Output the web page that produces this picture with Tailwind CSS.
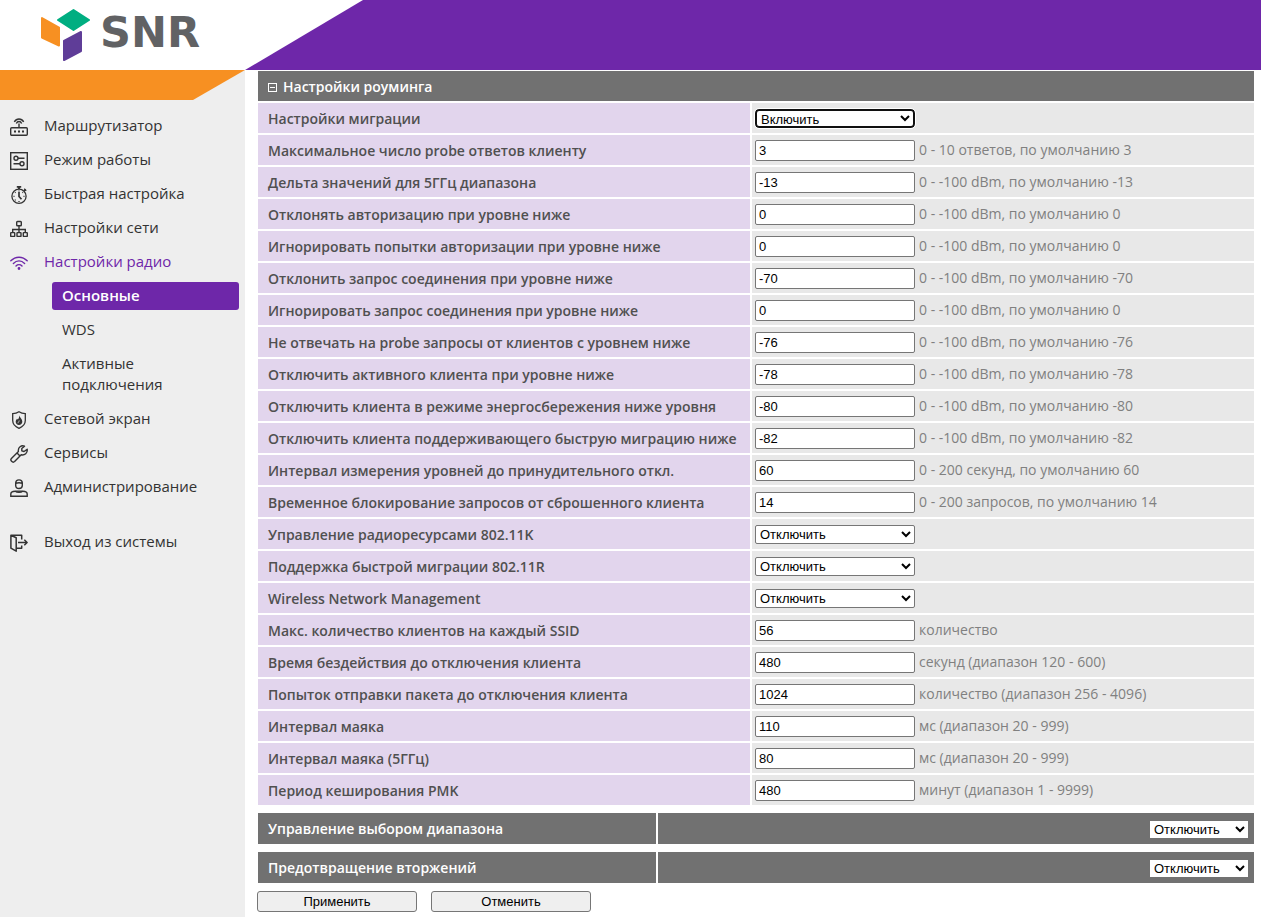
<!DOCTYPE html>
<html lang="ru">
<head>
<meta charset="utf-8">
<title>SNR — Настройки радио</title>
<script src="https://cdn.jsdelivr.net/npm/@tailwindcss/browser@4"></script>
</head>
<body class="flex min-h-screen flex-col bg-white font-['Open_Sans','Noto_Sans',sans-serif] text-[14px] text-[#333]">
<header class="flex h-[70px] shrink-0">
  <a href="#" class="flex w-[245px] shrink-0 items-start gap-[10px] pl-10" aria-label="SNR">
    <svg class="mt-2 h-[54px] w-[50px] shrink-0" viewBox="0 0 50 54" stroke-width="2" stroke-linejoin="round">
      <path d="M2 10 L19 19.500V37.500L2 29.500Z" fill="#f79022" stroke="#f79022"/>
      <path d="M33.500 2 L49 12 L33.500 22 L18 12Z" fill="#00ae81" stroke="#00ae81"/>
      <path d="M24 33 L41 24V43L24 52Z" fill="#5f3d98" stroke="#5f3d98"/>
    </svg>
    <span class="mt-[7px] font-['DejaVu_Sans',sans-serif] text-[43px] leading-[50px] font-bold text-[#616264]">SNR</span>
  </a>
  <div class="flex-1 bg-[#6e27a9] [clip-path:polygon(118px_0,100%_0,100%_100%,0_100%)]"></div>
</header>
<div class="flex flex-1">
  <aside class="w-[245px] shrink-0 bg-[#eee]">
    <div class="h-[30px] bg-[#f79022] [clip-path:polygon(0_0,100%_0,193px_100%,0_100%)]"></div>
    <nav class="pt-3 text-[15px] leading-[21px]">
      <ul class="flex flex-col gap-[6px]">
        <li><a href="#" class="flex items-start gap-4 pt-[3px] pb-[4px] pl-[10px]">
          <svg class="mt-[3px] size-[18px] shrink-0" viewBox="0 0 18 18" fill="none" stroke="#333" stroke-width="1.400"><rect x=".7" y="9.700" width="16.600" height="7.600" rx="1"/><path d="M9 5.500V9.500M4.300 3.800C6.600 0 11.400 0 13.700 3.800M6.300 5.500C7.500 2.800 10.500 2.800 11.700 5.500"/><path d="M4 13.500h2M8 13.500h2M12 13.500h2" stroke-width="2"/></svg>
          <span>Маршрутизатор</span></a></li>
        <li><a href="#" class="flex items-start gap-4 pt-[3px] pb-[4px] pl-[10px]">
          <svg class="mt-[3px] size-[18px] shrink-0" viewBox="0 0 18 18" fill="none" stroke="#333" stroke-width="1.400"><rect x=".7" y=".7" width="16.600" height="16.600"/><circle cx="6" cy="6.200" r="2"/><circle cx="12" cy="11.800" r="2"/><path d="M8 6.200h6.500M3.500 11.800H10"/></svg>
          <span>Режим работы</span></a></li>
        <li><a href="#" class="flex items-start gap-4 pt-[3px] pb-[4px] pl-[10px]">
          <svg class="mt-[3px] size-[18px] shrink-0" viewBox="0 0 18 18" fill="none" stroke="#333" stroke-width="1.300"><circle cx="9" cy="10.200" r="7.100"/><path d="M6.800.8h4.400M9 1v2" stroke-width="2"/><path d="M14 5l1.500-1.500M9 6v4.500l2.500 2.800" stroke-width="1.700"/><path d="M3.500 10.300h1M13.500 10.300h1M9 15v1M9 4.500v1M5 6.200l.6.600M13 6.200l-.6.600M5 14.200l.6-.6M14.200 2.700l2 2"/></svg>
          <span>Быстрая настройка</span></a></li>
        <li><a href="#" class="flex items-start gap-4 pt-[3px] pb-[4px] pl-[10px]">
          <svg class="mt-[3px] size-[18px] shrink-0" viewBox="0 0 18 18" fill="none" stroke="#333" stroke-width="1.400"><rect x="6.700" y="1.500" width="4.600" height="4.200" rx=".8"/><rect x=".7" y="12.600" width="4" height="3.800" rx=".5"/><rect x="7" y="12.600" width="4" height="3.800" rx=".5"/><rect x="13.300" y="12.600" width="4" height="3.800" rx=".5"/><path d="M9 5.700v6.900M2.700 12.600V9.500h12.600v3.100"/></svg>
          <span>Настройки сети</span></a></li>
        <li><a href="#" class="flex items-start gap-4 pt-[3px] pb-[4px] pl-[10px] text-[#6e27a9]">
          <svg class="mt-[3px] size-[18px] shrink-0" viewBox="0 0 18 18" fill="none" stroke="#6e27a9" stroke-width="1.400" stroke-linecap="round"><path d="M.8 6.800C5.500 2 12.500 2 17.200 6.800M3.400 9.400C6.700 6 11.300 6 14.600 9.400M6 12C7.700 10.300 10.300 10.300 12 12"/><circle cx="9" cy="14.500" r=".7" fill="#6e27a9"/></svg>
          <span>Настройки радио</span></a>
          <ul class="mt-[6px] mr-[6px] ml-[52px] flex flex-col gap-[6px]">
            <li><a href="#" class="block rounded-[3px] bg-[#6e27a9] px-[10px] pt-[3px] pb-[4px] font-semibold text-white" aria-current="page">Основные</a></li>
            <li><a href="#" class="block px-[10px] pt-[3px] pb-[4px]">WDS</a></li>
            <li><a href="#" class="block px-[10px] pt-[3px] pb-[4px]">Активные подключения</a></li>
          </ul></li>
        <li><a href="#" class="flex items-start gap-4 pt-[3px] pb-[4px] pl-[10px]">
          <svg class="mt-[3px] size-[18px] shrink-0" viewBox="0 0 18 18" fill="none" stroke="#333" stroke-width="1.300"><path d="M9 .8C7 2.200 5 2.700 2.700 2.700V9.500C2.700 13.500 5.500 15.800 9 17.300C12.500 15.800 15.300 13.500 15.300 9.500V2.700C13 2.700 11 2.200 9 .8Z"/><path d="M9.300 4.200C9.600 6.500 12.300 7.800 12.300 10.800C12.300 12.800 10.900 14 9 14S5.700 12.800 5.700 10.800C5.700 9.400 6.400 8.600 7 7.700L7.900 8.600C8.700 7.300 9.300 6 9.300 4.200Z" fill="#333" stroke="none"/><path d="M9.200 9.500C9 11 8 11.200 8 12.200" stroke="#eee" stroke-width=".8"/></svg>
          <span>Сетевой экран</span></a></li>
        <li><a href="#" class="flex items-start gap-4 pt-[3px] pb-[4px] pl-[10px]">
          <svg class="mt-[3px] size-[18px] shrink-0" viewBox="0 0 18 18" fill="none" stroke="#333" stroke-width="1.400" stroke-linejoin="round"><path d="M14.500 1.200C11.500 0 7.700 2 8.400 6.600L1.400 13.400C-.3 15.200 2.600 18.400 4.600 16.600L11.200 9.800C14.700 10.600 17.700 7.800 17.200 4.300L14 6.500L11.800 5.800V3.500Z"/><path d="M7 8l3 3"/></svg>
          <span>Сервисы</span></a></li>
        <li><a href="#" class="flex items-start gap-4 pt-[3px] pb-[4px] pl-[10px]">
          <svg class="mt-[3px] size-[18px] shrink-0" viewBox="0 0 18 18" fill="none" stroke="#333" stroke-width="1.400"><path d="M5.700 4.200C5.700-.3 12.300-.3 12.300 4.200V6.500C12.300 10.500 5.700 10.500 5.700 6.500ZM5.700 4.400C8 3.400 10 3.400 12.300 4.400M.8 17.200V15C.8 13.300 2.500 12.200 5.200 12.200C7 13.700 11 13.700 12.800 12.200C15.500 12.200 17.200 13.300 17.200 15V17.200Z"/><path d="M5.500 12.200h7"/></svg>
          <span>Администрирование</span></a></li>
        <li class="mt-[21px]"><a href="#" class="flex items-start gap-4 pt-[3px] pb-[4px] pl-[10px]">
          <svg class="mt-[3px] size-[18px] shrink-0" viewBox="0 0 18 18" fill="none" stroke="#333" stroke-width="1.500" stroke-linejoin="round"><path d="M.9 1.200L6.200 3.700V17.200L.9 14.200ZM.9 1.200H11.700V5.500M11.700 11.500V14.200H6.200M8 8.500H17M14.300 5.700L17.100 8.500L14.300 11.300"/></svg>
          <span>Выход из системы</span></a></li>
      </ul>
    </nav>
  </aside>
  <main class="min-w-0 flex-1 pr-[5px] pb-[5px] pl-[11px]">
    <form>
      <table class="-mt-px w-full border-separate border-spacing-[2px]">
        <thead>
          <tr><th colspan="2" class="h-[30px] bg-[#717171] px-[10px] pt-[2px] text-left leading-5 font-semibold text-white">
            <span class="flex items-center gap-[6px]"><button type="button" aria-label="Свернуть" class="flex size-[9px] items-center justify-center border border-white"><span class="h-px w-[5px] bg-white"></span></button>Настройки роуминга</span></th></tr>
        </thead>
        <tbody id="rows"></tbody>
      </table>
      <table class="mt-1 w-full border-separate border-spacing-[2px]">
        <tr class="bg-[#717171]">
          <th class="h-[31px] w-[40%] px-[10px] text-left leading-5 font-semibold text-white"><label for="band">Управление выбором диапазона</label></th>
          <td class="pt-px pr-[6px] text-right leading-none"><select id="band" class="h-[17px] w-[98px] bg-white font-['Liberation_Sans',sans-serif] text-[13px] text-black"><option>Отключить</option><option>Включить</option></select></td>
        </tr>
      </table>
      <table class="mt-1 w-full border-separate border-spacing-[2px]">
        <tr class="bg-[#717171]">
          <th class="h-[31px] w-[40%] px-[10px] text-left leading-5 font-semibold text-white"><label for="ids">Предотвращение вторжений</label></th>
          <td class="pt-px pr-[6px] text-right leading-none"><select id="ids" class="h-[17px] w-[98px] bg-white font-['Liberation_Sans',sans-serif] text-[13px] text-black"><option>Отключить</option><option>Включить</option></select></td>
        </tr>
      </table>
      <div class="mt-[6px] flex gap-[14px] pl-px font-['Liberation_Sans',sans-serif] text-[13px] leading-[19px] text-black">
        <button type="submit" class="w-40 rounded-[3px] border border-[#767676] bg-[#efefef]">Применить</button>
        <button type="reset" class="w-40 rounded-[3px] border border-[#767676] bg-[#efefef]">Отменить</button>
      </div>
    </form>
  </main>
</div>
<script>
// [label, value, hint]; a row without a hint is an on/off drop-down
const rows = [
  ['Настройки миграции', 'Включить'],
  ['Максимальное число probe ответов клиенту', '3', '0 - 10 ответов, по умолчанию 3'],
  ['Дельта значений для 5ГГц диапазона', '-13', '0 - -100 dBm, по умолчанию -13'],
  ['Отклонять авторизацию при уровне ниже', '0', '0 - -100 dBm, по умолчанию 0'],
  ['Игнорировать попытки авторизации при уровне ниже', '0', '0 - -100 dBm, по умолчанию 0'],
  ['Отклонить запрос соединения при уровне ниже', '-70', '0 - -100 dBm, по умолчанию -70'],
  ['Игнорировать запрос соединения при уровне ниже', '0', '0 - -100 dBm, по умолчанию 0'],
  ['Не отвечать на probe запросы от клиентов с уровнем ниже', '-76', '0 - -100 dBm, по умолчанию -76'],
  ['Отключить активного клиента при уровне ниже', '-78', '0 - -100 dBm, по умолчанию -78'],
  ['Отключить клиента в режиме энергосбережения ниже уровня', '-80', '0 - -100 dBm, по умолчанию -80'],
  ['Отключить клиента поддерживающего быструю миграцию ниже', '-82', '0 - -100 dBm, по умолчанию -82'],
  ['Интервал измерения уровней до принудительного откл.', '60', '0 - 200 секунд, по умолчанию 60'],
  ['Временное блокирование запросов от сброшенного клиента', '14', '0 - 200 запросов, по умолчанию 14'],
  ['Управление радиоресурсами 802.11K', 'Отключить'],
  ['Поддержка быстрой миграции 802.11R', 'Отключить'],
  ['Wireless Network Management', 'Отключить'],
  ['Макс. количество клиентов на каждый SSID', '56', 'количество'],
  ['Время бездействия до отключения клиента', '480', 'секунд (диапазон 120 - 600)'],
  ['Попыток отправки пакета до отключения клиента', '1024', 'количество (диапазон 256 - 4096)'],
  ['Интервал маяка', '110', 'мс (диапазон 20 - 999)'],
  ['Интервал маяка (5ГГц)', '80', 'мс (диапазон 20 - 999)'],
  ['Период кеширования PMK', '480', 'минут (диапазон 1 - 9999)'],
];
document.getElementById('rows').innerHTML = rows.map(([label, value, hint], i) => {
  const look = i === 0
    ? 'h-[19px] w-40 rounded-[4px] border-2 border-[#101010] outline-1 outline-white bg-white'
    : 'h-[19px] w-40 rounded-[2px] border border-[#767676] bg-white';
  const other = value === 'Включить' ? 'Отключить' : 'Включить';
  const control = hint
    ? `<input id="f${i}" type="text" value="${value}" class="h-[21px] w-40 rounded-[2px] border border-[#767676] bg-white px-[3px] font-['Liberation_Sans',sans-serif] text-[13px] text-black"><span class="leading-[19px]">${hint}</span>`
    : `<select id="f${i}" class="${look} font-['Liberation_Sans',sans-serif] text-[13px] text-black"><option>${value}</option><option>${other}</option></select>`;
  return `<tr>
    <th class="h-[30px] w-[492px] bg-[#e2d5ed] pt-[2px] pr-1 pl-[10px] text-left leading-5 font-semibold whitespace-nowrap text-[#505050]"><label for="f${i}">${label}</label></th>
    <td class="bg-[#e8e8e8] px-[3px] pt-px text-[#808080]"><div class="flex items-start gap-1">${control}</div></td></tr>`;
}).join('');
</script>
</body>
</html>
